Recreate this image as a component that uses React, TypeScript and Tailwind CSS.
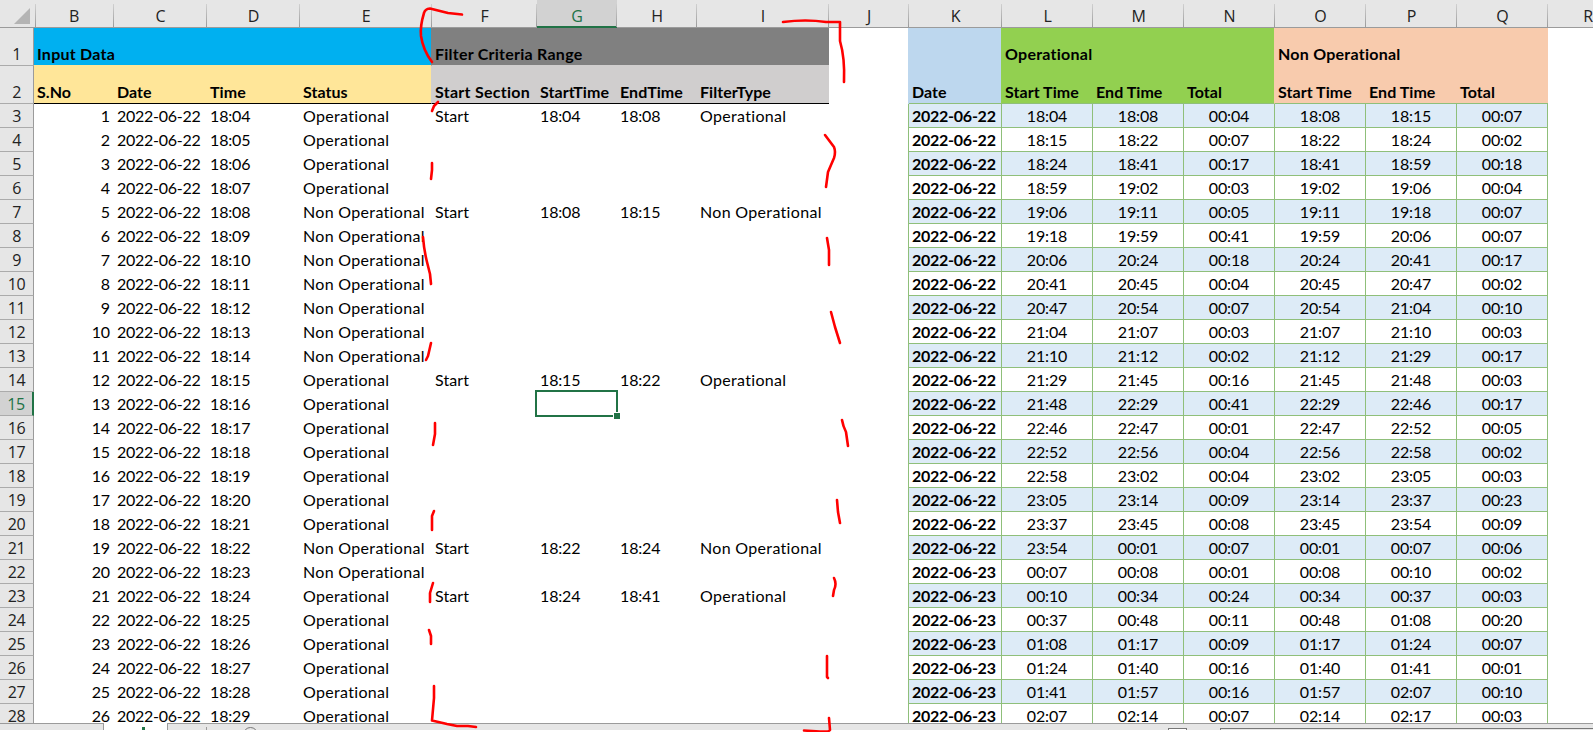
// ── Column layout: row header + columns B..R ──
const COLS =
  "grid w-[1628px] grid-rows-[100%] grid-cols-[34px_80px_93px_93px_132px_105px_80px_80px_132px_80px_93px_91px_91px_91px_91px_91px_91px_80px]";

const LETTERS = ["B", "C", "D", "E", "F", "G", "H", "I", "J", "K", "L", "M", "N", "O", "P", "Q", "R"];

// ── Input data: serial numbers whose status is "Non Operational" ──
const NON_OPERATIONAL = [5, 6, 7, 8, 9, 10, 11, 19, 20];

// One reading per minute
const TIMES = [
  "18:04", "18:05", "18:06", "18:07", "18:08", "18:09", "18:10", "18:11", "18:12",
  "18:13", "18:14", "18:15", "18:16", "18:17", "18:18", "18:19", "18:20", "18:21",
  "18:22", "18:23", "18:24", "18:25", "18:26", "18:27", "18:28", "18:29",
];

// ── Filter criteria, keyed by sheet row ──
const FILTERS: Record<number, string[]> = {
  3: ["Start", "18:04", "18:08", "Operational"],
  7: ["Start", "18:08", "18:15", "Non Operational"],
  14: ["Start", "18:15", "18:22", "Operational"],
  21: ["Start", "18:22", "18:24", "Non Operational"],
  23: ["Start", "18:24", "18:41", "Operational"],
};

// ── Summary table: start, end, total for both states ──
const SUMMARY = [
  "18:04 18:08 00:04 18:08 18:15 00:07",
  "18:15 18:22 00:07 18:22 18:24 00:02",
  "18:24 18:41 00:17 18:41 18:59 00:18",
  "18:59 19:02 00:03 19:02 19:06 00:04",
  "19:06 19:11 00:05 19:11 19:18 00:07",
  "19:18 19:59 00:41 19:59 20:06 00:07",
  "20:06 20:24 00:18 20:24 20:41 00:17",
  "20:41 20:45 00:04 20:45 20:47 00:02",
  "20:47 20:54 00:07 20:54 21:04 00:10",
  "21:04 21:07 00:03 21:07 21:10 00:03",
  "21:10 21:12 00:02 21:12 21:29 00:17",
  "21:29 21:45 00:16 21:45 21:48 00:03",
  "21:48 22:29 00:41 22:29 22:46 00:17",
  "22:46 22:47 00:01 22:47 22:52 00:05",
  "22:52 22:56 00:04 22:56 22:58 00:02",
  "22:58 23:02 00:04 23:02 23:05 00:03",
  "23:05 23:14 00:09 23:14 23:37 00:23",
  "23:37 23:45 00:08 23:45 23:54 00:09",
  "23:54 00:01 00:07 00:01 00:07 00:06",
  "00:07 00:08 00:01 00:08 00:10 00:02",
  "00:10 00:34 00:24 00:34 00:37 00:03",
  "00:37 00:48 00:11 00:48 01:08 00:20",
  "01:08 01:17 00:09 01:17 01:24 00:07",
  "01:24 01:40 00:16 01:40 01:41 00:01",
  "01:41 01:57 00:16 01:57 02:07 00:10",
  "02:07 02:14 00:07 02:14 02:17 00:03",
];

// ── Freehand marker strokes around the filter range ──
const STROKES = [
  "M462 14.5L448 13L430 8.5Q425 9 424 13Q420 26 421 36Q423 50 432 62",
  "M783 22Q806 19 826 22L840 22L840 41Q845 58 844 82",
  "M438 102L434 106L432 111",
  "M432 163V170L431 179",
  "M825 135L834 147Q836 152 834 158L828 172L826 187",
  "M423 237Q424 250 427 262L430 274L431 284",
  "M827 238L829 250V265",
  "M831 312L835 327L840 343",
  "M431 343L428 356L426 360",
  "M435 423V434L433 445",
  "M842 420Q843 426 846 432L848 446",
  "M434 511L432 516V530",
  "M837 500L838 512L840 523",
  "M433 583L430 593V602",
  "M834 578Q837 584 834 590L833 596",
  "M429 630L431 636V644",
  "M827 656V677L828 678",
  "M434 686V698L432 720.5L447 724L457 726L468 726L476 727",
  "M829 718L830 730Q829 732 820 731.5L804 730.5",
];

function Divider({ className }: { className: string }) {
  return <i className={`absolute top-1 h-[23px] w-px bg-linear-to-b from-[#d0d0d0] to-[#9b9b9b] ${className}`} />;
}

function ColumnHeaders() {
  return (
    <div className={`${COLS} h-7 bg-[#e6e6e6] font-['Open_Sans',sans-serif] text-[16px] text-[#222]`}>
      <div className="relative flex items-end justify-end border-b border-[#9b9b9b] pr-1 pb-[3px]">
        <svg className="size-4" viewBox="0 0 16 16">
          <path d="M16 0V16H0Z" fill="#b4b4b4" />
        </svg>
        <Divider className="-right-[2px]" />
      </div>
      {LETTERS.map((c) => (
        <div
          key={c}
          className={`relative text-center leading-[33px] ${
            c === "G" ? "border-b-2 border-[#217346] bg-[#d2d2d2] text-[#217346]" : "border-b border-[#9b9b9b]"
          }`}
        >
          {c}
          <Divider className="right-0" />
        </div>
      ))}
    </div>
  );
}

function RowHeader({ n }: { n: number }) {
  const active = n === 15;
  return (
    <div
      className={`flex items-end justify-center border-b border-b-[#ababab] font-['Open_Sans',sans-serif] text-[16px] font-normal tracking-[-0.4px] ${
        active
          ? "border-r-2 border-r-[#217346] bg-[#d2d2d2] text-[#217346]"
          : "border-r border-r-[#9b9b9b] bg-[#e6e6e6] text-[#222]"
      }`}
    >
      <span className="-mb-px leading-6">{n}</span>
    </div>
  );
}

// Title row: coloured group captions
function TitleRow() {
  return (
    <div className={`${COLS} h-[38px] font-bold tracking-[0.25px]`}>
      <RowHeader n={1} />
      <div className="col-span-4 flex items-end border-r border-b border-r-[#808080] border-b-[#ffe699] bg-[#00b0f0] pl-[3px]">
        <span className="-mb-px">Input Data</span>
      </div>
      <div className="col-span-4 flex items-end border-b border-[#d0cece] bg-[#808080] pl-[3px]">
        <span className="-mb-px">Filter Criteria Range</span>
      </div>
      <div className="border-r border-[#bdd7ee]" />
      <div className="border-r border-[#92d050] bg-[#bdd7ee]" />
      <div className="col-span-3 flex items-end border-r border-[#f8cbad] bg-[#92d050] pl-[3px]">Operational</div>
      <div className="col-span-3 flex items-end bg-[#f8cbad] pl-[3px]">Non Operational</div>
    </div>
  );
}

const INPUT_HEAD = "flex items-end border-b border-b-black bg-[#ffe699] pl-[3px]";
const FILTER_HEAD = "flex items-end border-b border-b-black bg-[#d0cece] pl-[3px]";
const OP_HEAD = "flex items-end border-b border-b-[#8fbf7a] bg-[#92d050] pl-[3px]";
const NONOP_HEAD = "flex items-end border-b border-b-[#8fbf7a] bg-[#f8cbad] pl-[3px]";

function FieldRow() {
  return (
    <div className={`${COLS} h-[38px] font-bold tracking-[0.05px] *:whitespace-nowrap`}>
      <RowHeader n={2} />
      {["S.No", "Date", "Time"].map((t) => (
        <div key={t} className={INPUT_HEAD}><span className="-mb-px">{t}</span></div>
      ))}
      <div className={`${INPUT_HEAD} border-r border-r-[#d0cece]`}><span className="-mb-px">Status</span></div>
      <div className={FILTER_HEAD}><span className="-mb-px tracking-[0.27px]">Start Section</span></div>
      {["StartTime", "EndTime", "FilterType"].map((t) => (
        <div key={t} className={FILTER_HEAD}><span className="-mb-px">{t}</span></div>
      ))}
      <div className="border-r border-[#bdd7ee]" />
      <div className="flex items-end border-r border-b border-r-[#92d050] border-b-[#8fbf7a] bg-[#bdd7ee] pl-[3px]">
        <span className="-mb-px">Date</span>
      </div>
      <div className={OP_HEAD}><span className="-mb-px">Start Time</span></div>
      <div className={OP_HEAD}><span className="-mb-px">End Time</span></div>
      <div className={`${OP_HEAD} border-r border-r-[#f8cbad]`}><span className="-mb-px">Total</span></div>
      {["Start Time", "End Time", "Total"].map((t) => (
        <div key={t} className={NONOP_HEAD}><span className="-mb-px">{t}</span></div>
      ))}
    </div>
  );
}

function DataRow({ index }: { index: number }) {
  const row = index + 3;
  const sno = index + 1;
  const filter = FILTERS[row] ?? ["", "", "", ""];
  const band = index % 2 === 0 ? "bg-[#ddebf7]" : "bg-white";
  return (
    <div className={`${COLS} h-6 shrink-0 *:whitespace-nowrap`}>
      <RowHeader n={row} />
      <div className="pr-1 text-right">{sno}</div>
      <div className="pl-[3px] tracking-[-0.25px]">2022-06-22</div>
      <div className="pl-[3px]">{TIMES[index]}</div>
      <div className="pl-[3px] tracking-[0.32px]">
        {NON_OPERATIONAL.includes(sno) ? "Non Operational" : "Operational"}
      </div>
      {filter.map((value, i) => (
        <div key={i} className={`relative pl-[3px] ${i === 3 ? "tracking-[0.32px]" : i === 0 ? "tracking-[0.1px]" : ""}`}>
          {value}
          {/* Selected cell outline with fill handle */}
          {row === 15 && i === 1 && (
            <div className="absolute -top-[2px] -left-[2px] z-10 h-[27px] w-[83px] border-2 border-[#217346]">
              <i className="absolute -right-[4px] -bottom-[4px] size-[7px] border-t border-l border-white bg-[#217346]" />
            </div>
          )}
        </div>
      ))}
      <div className="border-r border-[#8fbf7a]" />
      <div className={`border-r border-b border-[#8fbf7a] pl-[3px] font-bold tracking-[-0.25px] ${band}`}>
        {index < 19 ? "2022-06-22" : "2022-06-23"}
      </div>
      {SUMMARY[index].split(" ").map((value, i) => (
        <div key={i} className={`border-r border-b border-[#8fbf7a] text-center ${band}`}>{value}</div>
      ))}
    </div>
  );
}

// Sliver of the sheet tab bar at the bottom edge
function TabBar() {
  return (
    <div className="flex h-[7px] w-full overflow-hidden bg-[#e6e6e6]">
      <div className="w-[104px] border-t border-r border-[#9b9b9b]" />
      <div className="flex w-[63px] justify-center bg-white">
        <i className="mt-1 ml-[15px] h-[3px] w-[3px] bg-[#217346]" />
      </div>
      <div className="flex w-[40px] border-t border-l border-[#9b9b9b]">
        <i className="mt-[3px] ml-auto h-1 w-px bg-[#9b9b9b]" />
      </div>
      <div className="flex grow border-t border-[#9b9b9b]">
        <i className="mt-[3px] ml-[36px] size-[15px] shrink-0 rounded-full border-[1.5px] border-[#777]" />
      </div>
      <div className="flex w-[425px] border-t border-[#9b9b9b]">
        <i className="mt-1 mr-[33px] h-[3px] w-[19px] border-x border-t border-[#777] bg-white" />
        <i className="mt-1 h-[3px] grow border-t border-l border-[#777]" />
      </div>
    </div>
  );
}

export default function App() {
  return (
    <div className="relative h-[732px] w-[1593px] overflow-hidden bg-white font-['Lato',sans-serif] text-[16px] leading-6 tracking-[-0.15px] text-black">
      <ColumnHeaders />
      <TitleRow />
      <FieldRow />
      <div className="flex h-[619px] flex-col overflow-hidden">
        {SUMMARY.map((_, i) => (
          <DataRow key={i} index={i} />
        ))}
      </div>
      <TabBar />

      {/* Marker overlay */}
      <svg className="absolute inset-0 z-20" width="1593" height="732" fill="none" stroke="#f00" strokeWidth="2.6" strokeLinecap="round" strokeLinejoin="round">
        {STROKES.map((d) => (
          <path key={d} d={d} />
        ))}
      </svg>
    </div>
  );
}
